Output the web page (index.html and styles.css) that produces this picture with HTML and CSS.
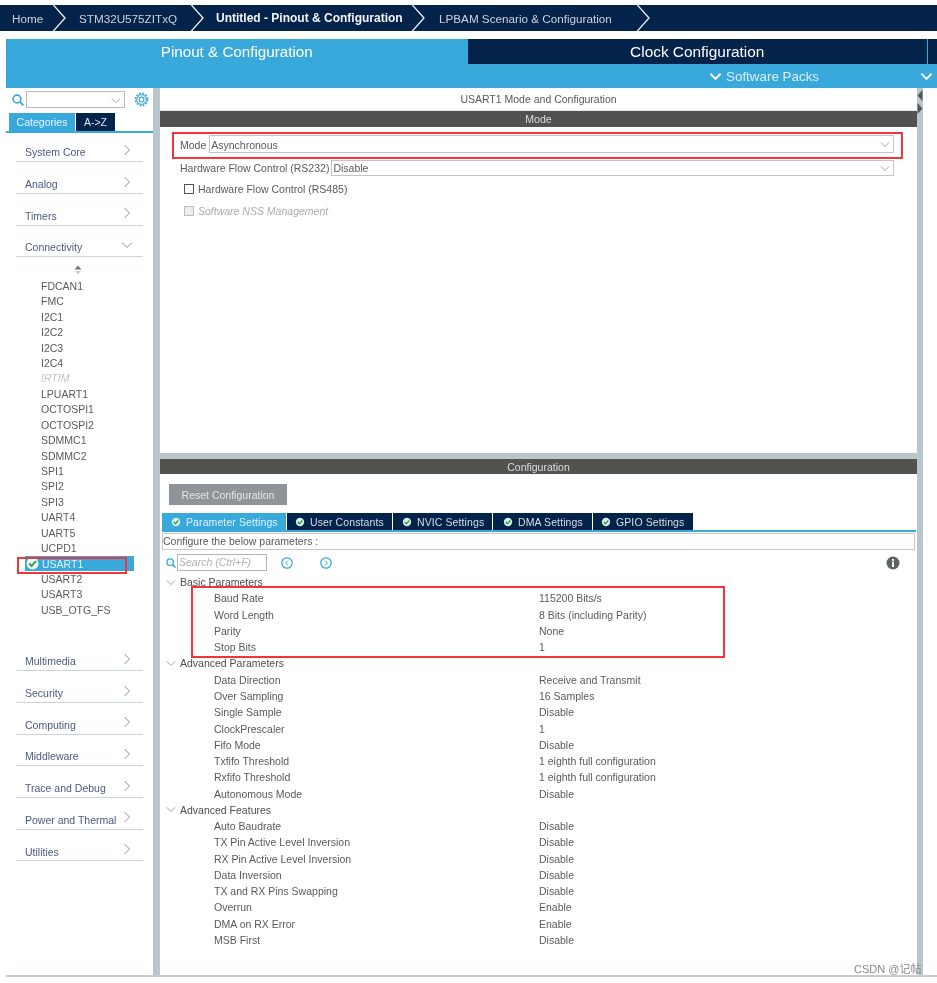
FILE: index.html
```html
<!DOCTYPE html>
<html lang="en">
<head>
<meta charset="utf-8">
<title>STM32CubeMX - USART1</title>
<link rel="stylesheet" href="styles.css">
</head>
<body>
<svg class="defs" width="0" height="0" aria-hidden="true">
  <defs>
    <symbol id="crumb" viewBox="0 0 14 26"><path d="M0.5 -1 L13 13 L0.5 27" fill="none" stroke="#eef2f6" stroke-width="1.3"/></symbol>
    <symbol id="right" viewBox="0 0 8 12"><path d="M1.5 1 L6.5 6 L1.5 11" fill="none" stroke="#8d9499" stroke-width="1"/></symbol>
    <symbol id="down" viewBox="0 0 12 8"><path d="M1 1.5 L6 6.5 L11 1.5" fill="none" stroke="#8d9499" stroke-width="1"/></symbol>
    <symbol id="downw" viewBox="0 0 14 9"><path d="M1.5 1.5 L7 7 L12.5 1.5" fill="none" stroke="#fff" stroke-width="2"/></symbol>
    <symbol id="ok" viewBox="0 0 12 12"><circle cx="6" cy="6" r="5" fill="#d6efe0"/><path d="M3.3 6 L5.3 8 L8.8 4.2" fill="none" stroke="#2f9e5b" stroke-width="1.7"/></symbol>
    <symbol id="mag" viewBox="0 0 12 12"><circle cx="5" cy="5" r="3.9" fill="none" stroke="#39a9dc" stroke-width="1.6"/><path d="M7.8 7.8 L11.4 11.4" stroke="#39a9dc" stroke-width="1.9"/></symbol>
  </defs>
</svg>

<nav class="crumbs">
  <a class="crumb c1">Home<svg class="crumb-sep"><use href="#crumb"/></svg></a>
  <a class="crumb c2">STM32U575ZITxQ<svg class="crumb-sep"><use href="#crumb"/></svg></a>
  <a class="crumb c3 current">Untitled - Pinout &amp; Configuration<svg class="crumb-sep"><use href="#crumb"/></svg></a>
  <a class="crumb c4">LPBAM Scenario &amp; Configuration<svg class="crumb-sep"><use href="#crumb"/></svg></a>
</nav>

<header class="head">
  <div class="head-top">
    <div class="head-tab active">Pinout &amp; Configuration</div>
    <div class="head-tab dark">Clock Configuration</div>
    <div class="head-tab stub"></div>
  </div>
  <div class="head-sub">
    <svg class="packs-chev"><use href="#downw"/></svg>
    <span class="packs">Software Packs</span>
    <svg class="packs-end"><use href="#downw"/></svg>
  </div>
</header>

<div class="work">
  <aside class="side">
    <div class="side-search">
      <svg class="side-mag"><use href="#mag"/></svg>
      <div class="side-select"><svg class="sel-chev"><use href="#down"/></svg></div>
      <svg class="gear" viewBox="0 0 16 16">
        <circle cx="8" cy="8" r="5.2" fill="none" stroke="#39a9dc" stroke-width="1.2"/>
        <circle cx="8" cy="8" r="2.6" fill="none" stroke="#39a9dc" stroke-width="1.2"/>
        <circle cx="8" cy="8" r="6.6" fill="none" stroke="#39a9dc" stroke-width="1.6" stroke-dasharray="2 1.46"/>
      </svg>
    </div>
    <div class="side-tabs">
      <div class="side-tab on">Categories</div>
      <div class="side-tab">A-&gt;Z</div>
    </div>
    <div class="cat"><span>System Core</span><svg class="cat-chev"><use href="#right"/></svg></div>
    <div class="cat"><span>Analog</span><svg class="cat-chev"><use href="#right"/></svg></div>
    <div class="cat"><span>Timers</span><svg class="cat-chev"><use href="#right"/></svg></div>
    <div class="cat"><span>Connectivity</span><svg class="cat-chev wide"><use href="#down"/></svg></div>
    <div class="periphs">
      <svg class="updown" viewBox="0 0 8 10"><path d="M4 0.5 L7.5 4.5 H0.5 Z" fill="#777"/><path d="M4 9.5 L7 6 H1 Z" fill="#ccc"/></svg>
      <div class="p">FDCAN1</div>
      <div class="p">FMC</div>
      <div class="p">I2C1</div>
      <div class="p">I2C2</div>
      <div class="p">I2C3</div>
      <div class="p">I2C4</div>
      <div class="p off">IRTIM</div>
      <div class="p">LPUART1</div>
      <div class="p">OCTOSPI1</div>
      <div class="p">OCTOSPI2</div>
      <div class="p">SDMMC1</div>
      <div class="p">SDMMC2</div>
      <div class="p">SPI1</div>
      <div class="p">SPI2</div>
      <div class="p">SPI3</div>
      <div class="p">UART4</div>
      <div class="p">UART5</div>
      <div class="p">UCPD1</div>
      <div class="p sel"><svg class="p-ok" viewBox="0 0 14 14"><circle cx="7" cy="7" r="6.4" fill="#f4faf6"/><path d="M3.4 7 L6 9.7 L10.8 4.4" fill="none" stroke="#2fa35c" stroke-width="2.1"/></svg>USART1</div>
      <div class="p">USART2</div>
      <div class="p">USART3</div>
      <div class="p">USB_OTG_FS</div>
    </div>
    <div class="cat"><span>Multimedia</span><svg class="cat-chev"><use href="#right"/></svg></div>
    <div class="cat"><span>Security</span><svg class="cat-chev"><use href="#right"/></svg></div>
    <div class="cat"><span>Computing</span><svg class="cat-chev"><use href="#right"/></svg></div>
    <div class="cat"><span>Middleware</span><svg class="cat-chev"><use href="#right"/></svg></div>
    <div class="cat"><span>Trace and Debug</span><svg class="cat-chev"><use href="#right"/></svg></div>
    <div class="cat"><span>Power and Thermal</span><svg class="cat-chev"><use href="#right"/></svg></div>
    <div class="cat"><span>Utilities</span><svg class="cat-chev"><use href="#right"/></svg></div>
  </aside>

  <main class="main">
    <section class="upper">
      <div class="title">USART1 Mode and Configuration</div>
      <div class="band">Mode</div>
      <div class="field first">
        <label>Mode</label>
        <div class="select">Asynchronous<svg class="sel-chev"><use href="#down"/></svg></div>
      </div>
      <div class="field second">
        <label>Hardware Flow Control (RS232)</label>
        <div class="select">Disable<svg class="sel-chev"><use href="#down"/></svg></div>
      </div>
      <div class="check"><span class="box"></span>Hardware Flow Control (RS485)</div>
      <div class="check disabled"><span class="box"></span>Software NSS Management</div>
    </section>

    <section class="lower">
      <div class="band slim">Configuration</div>
      <button class="reset">Reset Configuration</button>
      <div class="tabs">
        <div class="tab on t1"><svg class="tab-ok"><use href="#ok"/></svg>Parameter Settings</div>
        <div class="tab t2"><svg class="tab-ok"><use href="#ok"/></svg>User Constants</div>
        <div class="tab t3"><svg class="tab-ok"><use href="#ok"/></svg>NVIC Settings</div>
        <div class="tab t4"><svg class="tab-ok"><use href="#ok"/></svg>DMA Settings</div>
        <div class="tab t5"><svg class="tab-ok"><use href="#ok"/></svg>GPIO Settings</div>
      </div>
      <div class="hint">Configure the below parameters :</div>
      <div class="finder">
        <svg class="find-mag"><use href="#mag"/></svg>
        <div class="find-input">Search (Ctrl+F)</div>
        <svg class="nav prev" viewBox="0 0 12 12"><circle cx="6" cy="6" r="5.2" fill="none" stroke="#39a9dc" stroke-width="1.3"/><path d="M7 3.6 L4.6 6 L7 8.4" fill="none" stroke="#39a9dc"/></svg>
        <svg class="nav next" viewBox="0 0 12 12"><circle cx="6" cy="6" r="5.2" fill="none" stroke="#39a9dc" stroke-width="1.3"/><path d="M5 3.6 L7.4 6 L5 8.4" fill="none" stroke="#39a9dc"/></svg>
        <svg class="info" viewBox="0 0 14 14"><circle cx="7" cy="7" r="6.5" fill="#5f6264"/><rect x="6" y="5.8" width="2" height="5.2" fill="#fff"/><rect x="6" y="3" width="2" height="1.9" fill="#fff"/></svg>
      </div>
      <div class="tree">
        <div class="group"><svg class="g-chev"><use href="#down"/></svg>Basic Parameters</div>
        <div class="row"><span>Baud Rate</span><span>115200 Bits/s</span></div>
        <div class="row"><span>Word Length</span><span>8 Bits (including Parity)</span></div>
        <div class="row"><span>Parity</span><span>None</span></div>
        <div class="row"><span>Stop Bits</span><span>1</span></div>
        <div class="group"><svg class="g-chev"><use href="#down"/></svg>Advanced Parameters</div>
        <div class="row"><span>Data Direction</span><span>Receive and Transmit</span></div>
        <div class="row"><span>Over Sampling</span><span>16 Samples</span></div>
        <div class="row"><span>Single Sample</span><span>Disable</span></div>
        <div class="row"><span>ClockPrescaler</span><span>1</span></div>
        <div class="row"><span>Fifo Mode</span><span>Disable</span></div>
        <div class="row"><span>Txfifo Threshold</span><span>1 eighth full configuration</span></div>
        <div class="row"><span>Rxfifo Threshold</span><span>1 eighth full configuration</span></div>
        <div class="row"><span>Autonomous Mode</span><span>Disable</span></div>
        <div class="group"><svg class="g-chev"><use href="#down"/></svg>Advanced Features</div>
        <div class="row"><span>Auto Baudrate</span><span>Disable</span></div>
        <div class="row"><span>TX Pin Active Level Inversion</span><span>Disable</span></div>
        <div class="row"><span>RX Pin Active Level Inversion</span><span>Disable</span></div>
        <div class="row"><span>Data Inversion</span><span>Disable</span></div>
        <div class="row"><span>TX and RX Pins Swapping</span><span>Disable</span></div>
        <div class="row"><span>Overrun</span><span>Enable</span></div>
        <div class="row"><span>DMA on RX Error</span><span>Enable</span></div>
        <div class="row"><span>MSB First</span><span>Disable</span></div>
      </div>
    </section>
  </main>

  <div class="rail">
    <svg class="rail-arrows" viewBox="0 0 6 26"><path d="M5.5 1 L0.5 6.5 L5.5 12 Z" fill="#555"/><path d="M0.5 14 L5.5 19.5 L0.5 25 Z" fill="#555"/></svg>
  </div>
</div>
<div class="foot"></div>

<div class="mark mark-mode"></div>
<div class="mark mark-usart"></div>
<div class="mark mark-params"></div>
<div class="watermark">CSDN @记帖</div>
</body>
</html>
```

FILE: styles.css
```css
* { box-sizing: border-box; }
html, body { margin: 0; padding: 0; background: #fff; }
body {
  position: relative;
  width: 937px;
  height: 983px;
  overflow: hidden;
  padding-top: 5px;
  font-family: "Liberation Sans", Arial, sans-serif;
  font-size: 10.5px;
  color: #5a5a5a;
  filter: blur(0.45px);
}
.defs { position: absolute; }

/* breadcrumb */
.crumbs { display: flex; height: 26px; background: #03234b; color: #ccd3dc; font-size: 11.7px; overflow: hidden; }
.crumb { display: flex; align-items: center; height: 26px; flex: none; }
.crumb-sep { width: 14px; height: 26px; flex: none; }
.c1 { width: 66px; padding-left: 12px; justify-content: space-between; }
.c2 { width: 138px; padding-left: 13px; justify-content: space-between; }
.c3 { width: 221px; padding-left: 12px; justify-content: space-between; font-size: 12px; }
.c4 { width: 225px; padding-left: 14px; justify-content: space-between; }
.current { color: #f3f5f8; font-weight: 700; }

/* top tabs */
.head { margin: 8px 0 0 6px; height: 49px; background: #39a9dc; color: #fff; }
.head-top { display: flex; height: 25px; }
.head-tab { display: flex; align-items: center; justify-content: center; font-size: 15.2px; }
.head-tab.active { width: 462px; }
.head-tab.dark { width: 460px; background: #03234b; font-size: 15.4px; }
.head-tab.stub { width: 9px; margin-left: 1px; background: #03234b; }
.head-sub { display: flex; align-items: center; height: 24px; padding-left: 703px; }
.packs-chev { width: 13px; height: 9px; flex: none; }
.packs { margin-left: 4px; width: 190px; font-size: 13.4px; color: #d9eef9; }
.packs-end { width: 13px; height: 9px; flex: none; margin-left: 4px; }

/* work area */
.work { display: flex; margin-left: 6px; height: 887px; }
.side { width: 154px; flex: none; border-right: 7px solid #b9c6cc; }
.side-search { display: flex; align-items: center; height: 23px; padding-left: 6px; }
.side-mag { width: 12px; height: 12px; flex: none; }
.side-select { position: relative; width: 99px; height: 17px; margin-left: 2px; border: 1px solid #bcbcbc; }
.gear { width: 15px; height: 15px; margin-left: 9px; flex: none; }
.sel-chev { position: absolute; right: 3px; top: 50%; width: 10px; height: 7px; margin-top: -3px; }
.side-tabs { display: flex; height: 22px; padding: 2px 0 2px 3px; border-bottom: 2px solid #39a9dc; gap: 1px; }
.side-tab { display: flex; align-items: center; justify-content: center; width: 39px; height: 18px; background: #03234b; color: #dfe5ec; }
.side-tab.on { width: 66px; background: #39a9dc; color: #e6f4fb; }

.cat { display: flex; align-items: center; justify-content: space-between; height: 18.7px; margin: 13px 10px 0; padding: 0 12px 0 9px; border-bottom: 1px solid #c9d3d8; color: #4a5a80; }
.cat-chev { width: 8px; height: 12px; margin-bottom: 5px; flex: none; }
.cat-chev.wide { width: 12px; height: 8px; margin-right: -2px; }
.side-tabs + .cat { margin-top: 10.5px; }
.periphs { padding-top: 7px; margin-bottom: 21.3px; height: 374px; }
.updown { display: block; width: 8px; height: 10px; margin: 1px 0 3px 68px; }
.p { display: flex; align-items: center; height: 15.43px; padding-left: 35px; color: #5a5a5a; }
.p.off { color: #c6c6c6; font-style: italic; }
.p.sel { margin-left: 19px; padding-left: 1px; width: 109px; background: #39a9dc; color: #e4f3fb; gap: 3px; }
.p-ok { width: 13px; height: 13px; flex: none; }

.main { width: 757px; flex: none; }
.upper { height: 365px; }
.title { display: flex; align-items: center; justify-content: center; height: 23px; border-bottom: 1px solid #e4e8ea; }
.band { display: flex; align-items: center; justify-content: center; height: 16px; background: #525351; color: #dcdcdc; }
.field { display: flex; align-items: center; padding: 0 23px 0 20px; white-space: nowrap; }
.field.first { height: 18px; margin-top: 8px; }
.field.second { height: 16px; margin-top: 7px; }
.field label { margin-right: 2px; white-space: nowrap; }
.field.first label { margin-right: 3px; padding-top: 1px; }
.select { position: relative; flex: 1; height: 100%; display: flex; align-items: center; padding-left: 1px; border: 1px solid #c4c4c4; }
.field.first .select { padding-top: 1px; }
.check { display: flex; align-items: center; height: 22px; padding-left: 24px; }
.field.second + .check { margin-top: 2px; }
.box { width: 10px; height: 10px; margin-right: 4px; border: 1px solid #555; flex: none; }
.check.disabled { color: #acacac; font-style: italic; }
.check.disabled .box { border-color: #bdbdbd; background: #eee; }

.lower { height: 522px; border-top: 6px solid #b9c6cc; }
.band.slim { height: 15px; }
.reset { display: block; width: 118px; height: 21px; margin: 10px 0 8px 9px; padding: 0; background: #8f9498; border: 0; color: #e3e5e6; font: 10.5px "Liberation Sans", Arial, sans-serif; }
.tabs { display: flex; gap: 1px; height: 19px; margin: 0 1px 0 2px; border-bottom: 2px solid #39a9dc; }
.tab { display: flex; align-items: center; height: 17px; padding-left: 8px; background: #03234b; color: #d7dde5; white-space: nowrap; letter-spacing: .1px; }
.tab.on { background: #39a9dc; color: #dff1fa; }
.t1 { width: 124px; padding-left: 9px; } .t2 { width: 105px; } .t3 { width: 99px; padding-left: 9px; } .t4 { width: 99px; padding-left: 10px; } .t5 { width: 100px; }
.tab-ok { width: 10px; height: 10px; margin-right: 5px; flex: none; }
.hint { height: 17px; margin: 1px 2px 0; padding-left: 0; border: 1px solid #c8c8c8; line-height: 15px; white-space: nowrap; }
.finder { display: flex; align-items: center; height: 17px; margin-top: 4px; padding-left: 6px; }
.find-mag { width: 10px; height: 10px; flex: none; }
.find-input { width: 90px; height: 17px; margin-left: 1px; padding-left: 1px; border: 1px solid #b5b5b5; line-height: 15px; color: #b0b0b0; font-style: italic; }
.nav { width: 12px; height: 12px; flex: none; }
.prev { margin-left: 14px; } .next { margin-left: 27px; }
.info { width: 14px; height: 14px; margin-left: 554px; flex: none; }
.tree { margin-top: 3px; }
.group, .row { height: 16.27px; display: flex; align-items: center; white-space: nowrap; }
.group { padding-left: 6px; color: #4d4d4d; }
.g-chev { width: 10px; height: 7px; margin-right: 4px; flex: none; }
.row { padding-left: 54px; color: #5a5a5a; }
.row span:first-child { width: 325px; flex: none; }

.rail { position: relative; width: 6px; flex: none; background: #b9c6cc; }
.rail-arrows { position: absolute; left: 0; top: 1px; width: 6px; height: 26px; }
.foot { height: 2px; margin-left: 6px; background: #c3cdd2; }

/* annotation overlays */
.mark { position: absolute; border: 2px solid #f0353c; pointer-events: none; }
.mark-mode { left: 172px; top: 132px; width: 731px; height: 27px; }
.mark-usart { left: 17px; top: 557px; width: 110px; height: 17px; }
.mark-params { left: 191px; top: 586px; width: 534px; height: 72px; }
.watermark { position: absolute; left: 854px; top: 960px; font: 11px "Liberation Sans", "Noto Sans CJK SC", sans-serif; color: #8a8a8a; white-space: nowrap; }
```
